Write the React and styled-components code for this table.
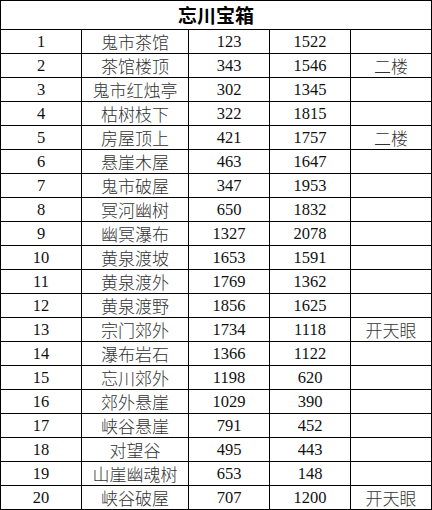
import React from "react";
import styled, { createGlobalStyle } from "styled-components";

const Global = createGlobalStyle`
  html, body { margin: 0; padding: 0; background: #fff; }
  body { font-family: "Liberation Serif", "Noto Sans CJK SC", serif; }
`;

const Table = styled.table`
  border-collapse: collapse;
  table-layout: fixed;
  width: 431px;
  color: #1a1a1a;
`;

const Col = styled.col`
  width: ${(p) => p.$w}px;
`;

const TitleCell = styled.th`
  height: 28px;
  padding: 0;
  border: 1px solid #000;
  font-family: "Noto Sans CJK SC", serif;
  font-weight: 700;
  font-size: 19px;
  line-height: 28px;
  text-align: center;
  color: #000;
`;

const Row = styled.tr`
  height: 24px;
`;

const Cell = styled.td`
  padding: 0;
  border: 1px solid #000;
  text-align: center;
  vertical-align: middle;
  font-family: ${(p) => (p.$cjk ? '"Noto Sans CJK SC", serif' : '"Liberation Serif", serif')};
  font-size: ${(p) => (p.$cjk ? "17px" : "16.5px")};
  font-weight: ${(p) => (p.$cjk ? 300 : 400)};
  line-height: 23px;
  white-space: nowrap;
  overflow: hidden;
  color: ${(p) => (p.$cjk ? "#333" : "#111")};
`;

const widths = [81, 107, 81, 81, 81];

const rows = [
  [1, "鬼市茶馆", 123, 1522, ""],
  [2, "茶馆楼顶", 343, 1546, "二楼"],
  [3, "鬼市红烛亭", 302, 1345, ""],
  [4, "枯树枝下", 322, 1815, ""],
  [5, "房屋顶上", 421, 1757, "二楼"],
  [6, "悬崖木屋", 463, 1647, ""],
  [7, "鬼市破屋", 347, 1953, ""],
  [8, "冥河幽树", 650, 1832, ""],
  [9, "幽冥瀑布", 1327, 2078, ""],
  [10, "黄泉渡坡", 1653, 1591, ""],
  [11, "黄泉渡外", 1769, 1362, ""],
  [12, "黄泉渡野", 1856, 1625, ""],
  [13, "宗门郊外", 1734, 1118, "开天眼"],
  [14, "瀑布岩石", 1366, 1122, ""],
  [15, "忘川郊外", 1198, 620, ""],
  [16, "郊外悬崖", 1029, 390, ""],
  [17, "峡谷悬崖", 791, 452, ""],
  [18, "对望谷", 495, 443, ""],
  [19, "山崖幽魂树", 653, 148, ""],
  [20, "峡谷破屋", 707, 1200, "开天眼"],
];

export default function App() {
  return (
    <>
      <Global />
      <Table>
        <colgroup>
          {widths.map((w, i) => (
            <Col key={i} $w={w} />
          ))}
        </colgroup>
        <thead>
          <tr>
            <TitleCell colSpan={5}>忘川宝箱</TitleCell>
          </tr>
        </thead>
        <tbody>
          {rows.map((r) => (
            <Row key={r[0]}>
              <Cell>{r[0]}</Cell>
              <Cell $cjk>{r[1]}</Cell>
              <Cell>{r[2]}</Cell>
              <Cell>{r[3]}</Cell>
              <Cell $cjk>{r[4]}</Cell>
            </Row>
          ))}
        </tbody>
      </Table>
    </>
  );
}
